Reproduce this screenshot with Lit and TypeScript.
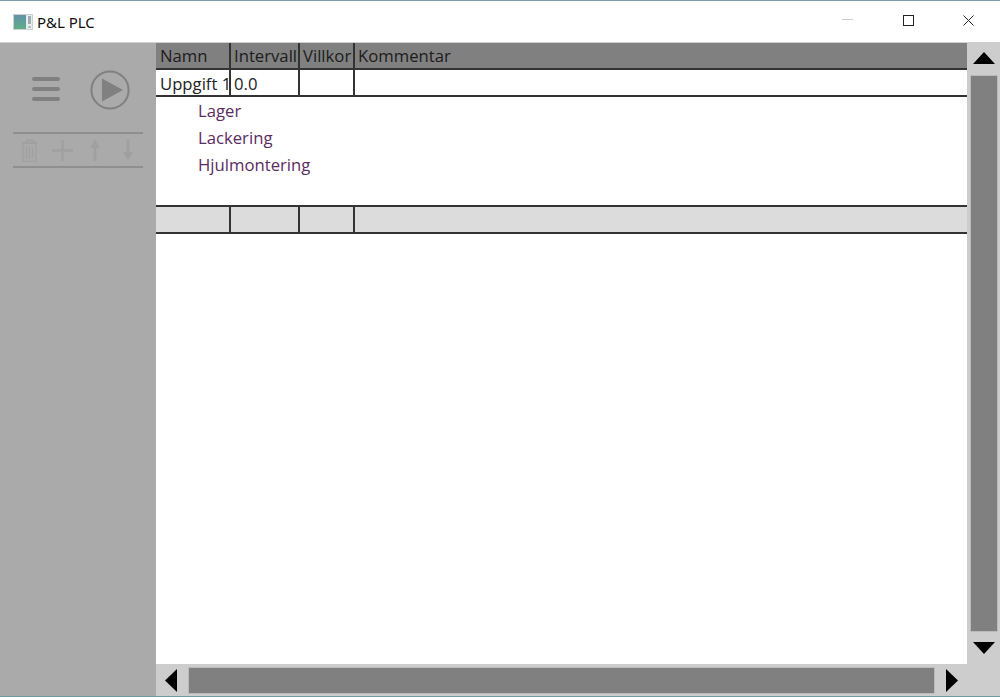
import { LitElement, html, css } from "lit";
import { customElement } from "lit/decorators.js";

@customElement("app-root")
export class AppRoot extends LitElement {
  static styles = css`
    :host { display: block; width: 1000px; height: 697px; overflow: hidden; font-family: "Open Sans", sans-serif; }
    .win { width: 1000px; height: 697px; display: flex; flex-direction: column; box-sizing: border-box; border-top: 1px solid #7f9cae; border-bottom: 1px solid #6f9a9e; background: #fff; }
    .title { height: 41px; flex: none; display: flex; align-items: center; background: #fff; border-bottom: 1px solid #d0d0d0; padding: 0 0 0 13px; font-family: "Noto Sans", "Open Sans", sans-serif; font-size: 15px; color: #111; }
    .title .logo { width: 20px; height: 16px; margin-right: 4px; display: block; opacity: 0.85; }
    .title .name { flex: 1; }
    .wb { display: flex; align-items: center; margin-top: -3px; }
    .wb svg { display: block; }
    .min { margin-right: 50px; }
    .max { margin-right: 49px; }
    .cls { margin-right: 26px; }
    .body { flex: 1; display: flex; min-height: 0; }
    .side { width: 156px; flex: none; background: #aaaaaa; box-sizing: border-box; padding: 27px 13px 0; }
    .top { display: flex; align-items: center; height: 40px; gap: 30px; padding-left: 19px; margin-bottom: 22px; }
    .top svg { display: block; }
    .burger { margin-top: -2px; }
    .tools { width: 130px; height: 36px; box-sizing: border-box; border-top: 2px solid #8f8f8f; border-bottom: 2px solid #8f8f8f; display: flex; align-items: center; padding-left: 9px; }
    .tools svg { display: block; flex: none; }
    .t1 { margin-right: 15px; }
    .t2 { margin-right: 17px; }
    .t3 { margin-right: 23px; }
    .main { flex: 1; display: flex; flex-direction: column; min-width: 0; }
    .mid { flex: 1; display: flex; min-height: 0; }
    .content { flex: 1; min-width: 0; background: #fff; }
    .row { display: grid; grid-template-columns: 75px 69px 55px 1fr; height: 27px; box-sizing: border-box; border-bottom: 2px solid #333; font-size: 16.7px; line-height: 25px; color: #222; }
    .cell { border-right: 2px solid #333; padding-left: 3px; white-space: nowrap; overflow: hidden; box-sizing: border-box; }
    .cell:first-child { padding-left: 4px; }
    .cell:last-child { border-right: 0; }
    .head { background: #808080; color: #1c1c1c; }
    .data { background: #fff; line-height: 27px; }
    .foot { background: #dcdcdc; }
    .subs { height: 110px; box-sizing: border-box; border-bottom: 2px solid #333; padding: 0 0 0 42px; font-size: 16.7px; line-height: 27px; color: #5b2c5f; }
    .vbar { width: 33px; flex: none; background: #cdcdcd; display: flex; flex-direction: column; align-items: center; }
    .vbar .arrow { height: 32px; flex: none; display: flex; align-items: center; justify-content: center; }
    .vbar .up { padding-bottom: 2px; box-sizing: border-box; }
    .vthumb { flex: 1; width: 28px; background: #808080; border: 1px solid #bbb; box-sizing: border-box; }
    .hbar { height: 32px; flex: none; background: #cdcdcd; display: flex; align-items: flex-start; padding-top: 3px; box-sizing: border-box; }
    .hbar .arrow { height: 27px; flex: none; display: flex; align-items: center; justify-content: center; box-sizing: border-box; }
    .hbar .left { width: 32px; padding-right: 2px; }
    .hbar .right { width: 33px; padding-left: 1px; }
    .hthumb { flex: 1; height: 27px; background: #808080; border: 1px solid #bbb; box-sizing: border-box; }
    .corner { width: 32px; flex: none; }
  `;

  render() {
    return html`<div class="win">
      <div class="title">
        <svg class="logo" viewBox="0 0 20 16">
          <rect x="0" y="0" width="20" height="16" fill="#c4c8c8"/>
          <defs><linearGradient id="g" x1="0" y1="0" x2="0" y2="1"><stop offset="0" stop-color="#47809c"/><stop offset="1" stop-color="#43a070"/></linearGradient></defs>
          <rect x="1" y="1" width="12" height="14" fill="url(#g)"/>
          <rect x="13" y="1" width="6" height="14" fill="#e6eaea"/>
          <rect x="15" y="2" width="3" height="8" fill="#8ba3a8"/>
          <rect x="15" y="12" width="3" height="2" fill="#a8b8bb"/>
        </svg>
        <span class="name">P&amp;L PLC</span>
        <div class="wb">
          <svg class="min" width="11" height="2" viewBox="0 0 11 2"><rect y="0" width="11" height="1" fill="#cfcfcf"/></svg>
          <svg class="max" width="11" height="11" viewBox="0 0 11 11"><rect x="0.5" y="0.5" width="10" height="10" fill="none" stroke="#222"/></svg>
          <svg class="cls" width="11" height="11" viewBox="0 0 11 11"><path d="M0.5 0.5L10.5 10.5M10.5 0.5L0.5 10.5" stroke="#222" fill="none"/></svg>
        </div>
      </div>
      <div class="body">
        <div class="side">
          <div class="top">
            <svg class="burger" width="28" height="24" viewBox="0 0 28 24"><g stroke="#808080" stroke-width="4" stroke-linecap="round"><path d="M2 2H26M2 12H26M2 22H26"/></g></svg>
            <svg width="40" height="40" viewBox="0 0 40 40"><circle cx="20" cy="20" r="18.6" fill="none" stroke="#808080" stroke-width="2"/><path d="M12 8.5L33 20L12 31.5Z" fill="#808080"/></svg>
          </div>
          <div class="tools">
            <svg class="t1" width="15" height="23" viewBox="0 0 15 23"><g fill="none" stroke="#a0a0a0" stroke-width="1.4"><path d="M0 3.5H15M4.5 3.5V1H10.5V3.5"/><rect x="1" y="4.5" width="13" height="18"/><path d="M4.5 7.5V19.5M7.5 7.5V19.5M10.5 7.5V19.5"/></g></svg>
            <svg class="t2" width="21" height="21" viewBox="0 0 21 21"><path d="M0 10.5H21M10.5 0V21" stroke="#a0a0a0" stroke-width="2.4" fill="none"/></svg>
            <svg class="t3" width="10" height="22" viewBox="0 0 10 22"><path d="M5 0L10 9H6.5V22H3.5V9H0Z" fill="#a0a0a0"/></svg>
            <svg width="10" height="22" viewBox="0 0 10 22"><path d="M5 22L10 13H6.5V0H3.5V13H0Z" fill="#a0a0a0"/></svg>
          </div>
        </div>
        <div class="main">
          <div class="mid">
            <div class="content">
              <div class="row head"><div class="cell">Namn</div><div class="cell">Intervall</div><div class="cell">Villkor</div><div class="cell">Kommentar</div></div>
              <div class="row data"><div class="cell">Uppgift 1</div><div class="cell">0.0</div><div class="cell"></div><div class="cell"></div></div>
              <div class="subs"><div>Lager</div><div>Lackering</div><div>Hjulmontering</div></div>
              <div class="row foot"><div class="cell"></div><div class="cell"></div><div class="cell"></div><div class="cell"></div></div>
            </div>
            <div class="vbar">
              <div class="arrow up"><svg width="22" height="12" viewBox="0 0 22 12"><path d="M11 0L22 12H0Z" fill="#000"/></svg></div>
              <div class="vthumb"></div>
              <div class="arrow"><svg width="22" height="12" viewBox="0 0 22 12"><path d="M11 12L22 0H0Z" fill="#000"/></svg></div>
            </div>
          </div>
          <div class="hbar">
            <div class="arrow left"><svg width="12" height="23" viewBox="0 0 12 23"><path d="M0 11.5L12 0V23Z" fill="#000"/></svg></div>
            <div class="hthumb"></div>
            <div class="arrow right"><svg width="12" height="23" viewBox="0 0 12 23"><path d="M12 11.5L0 0V23Z" fill="#000"/></svg></div>
            <div class="corner"></div>
          </div>
        </div>
      </div>
    </div>`;
  }
}
